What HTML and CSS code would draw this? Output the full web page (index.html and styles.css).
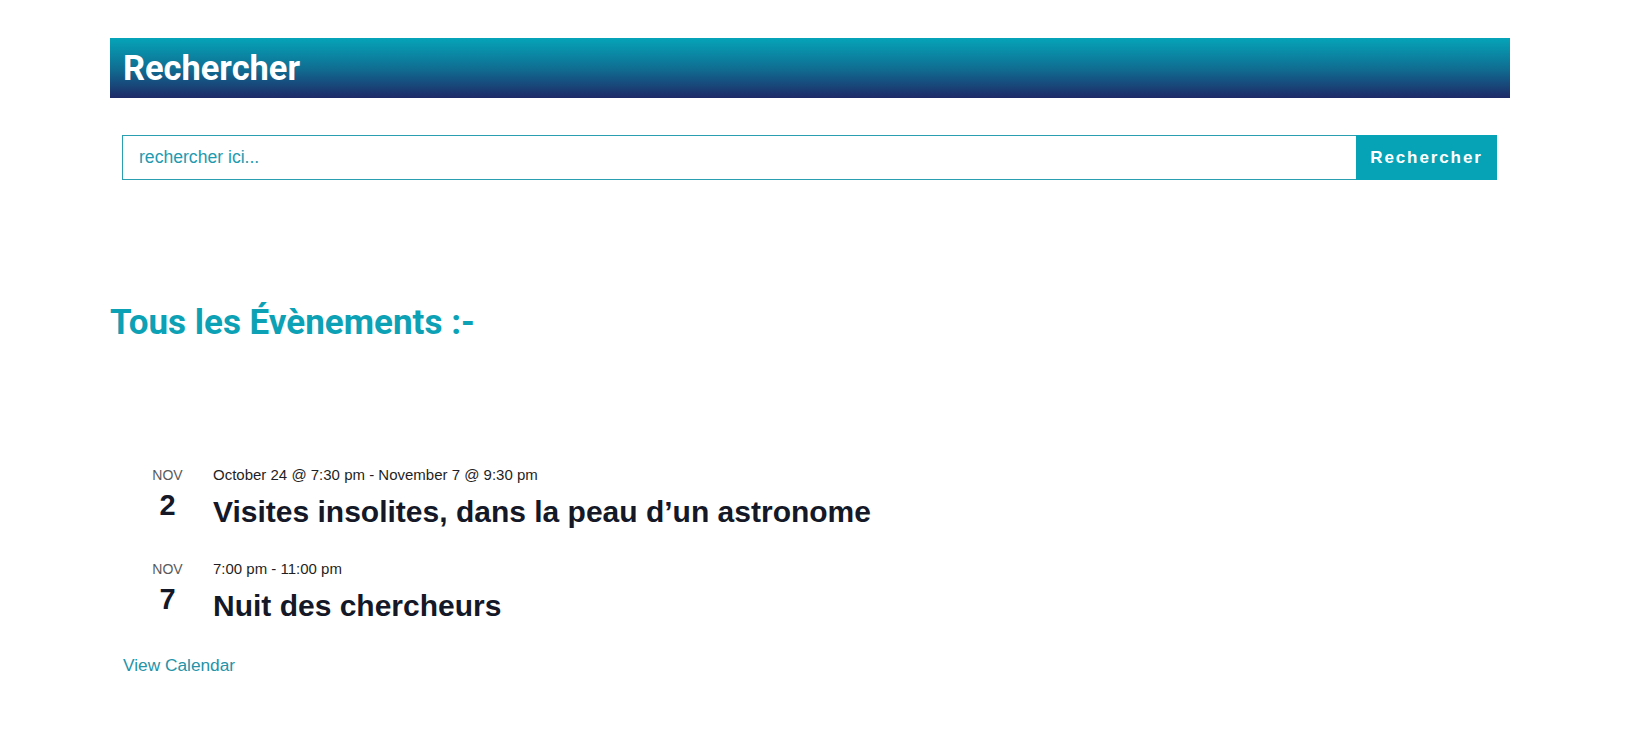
FILE: index.html
```html
<!DOCTYPE html>
<html lang="fr">
<head>
<meta charset="utf-8">
<title>Rechercher</title>
<link rel="stylesheet" href="styles.css">
</head>
<body>
<div class="page">
  <div class="search-header">
    <h2 class="search-title">Rechercher</h2>
  </div>
  <form class="search-form" onsubmit="return false">
    <input class="search-input" type="text" placeholder="rechercher ici...">
    <button class="search-button" type="submit">Rechercher</button>
  </form>

  <h2 class="events-heading">Tous les Évènements :-</h2>

  <div class="events">
    <div class="event">
      <div class="event-date">
        <span class="event-month">NOV</span>
        <span class="event-day">2</span>
      </div>
      <div class="event-info">
        <div class="event-time">October 24 @ 7:30 pm - November 7 @ 9:30 pm</div>
        <h3 class="event-title">Visites insolites, dans la peau d’un astronome</h3>
      </div>
    </div>
    <div class="event">
      <div class="event-date">
        <span class="event-month">NOV</span>
        <span class="event-day">7</span>
      </div>
      <div class="event-info">
        <div class="event-time">7:00 pm - 11:00 pm</div>
        <h3 class="event-title">Nuit des chercheurs</h3>
      </div>
    </div>
    <a class="view-calendar" href="#">View Calendar</a>
  </div>
</div>
</body>
</html>
```
FILE: styles.css
```css
html, body {
  margin: 0;
  padding: 0;
  background: #ffffff;
}
body {
  font-family: "Liberation Sans", Arial, sans-serif;
}
.page {
  width: 1400px;
  margin-left: 110px;
  padding-top: 38px;
}
.search-header {
  height: 60px;
  display: flex;
  align-items: center;
  padding-left: 13px;
  background: linear-gradient(to bottom, #05a4b8 0%, #0f6f93 50%, #1e2a68 100%);
}
.search-title {
  margin: 0;
  font-family: Roboto, "Liberation Sans", sans-serif;
  font-weight: 700;
  font-size: 34.4px;
  line-height: 1;
  color: #ffffff;
}
.search-form {
  display: flex;
  margin: 37px 0 0 12px;
  width: 1375px;
  height: 45px;
}
.search-input {
  flex: 1;
  box-sizing: border-box;
  height: 45px;
  margin: 0;
  border: 1px solid #2a9fb1;
  border-right: none;
  padding: 0 16px;
  font-family: "Liberation Sans", Arial, sans-serif;
  font-size: 17.6px;
  color: #1e9bb0;
  outline: none;
}
.search-input::placeholder {
  color: #1e9bb0;
  opacity: 1;
}
.search-button {
  width: 141px;
  height: 45px;
  margin: 0;
  border: none;
  background: #06a3b7;
  color: #ffffff;
  font-family: "Liberation Sans", Arial, sans-serif;
  font-weight: 700;
  font-size: 17px;
  letter-spacing: 1.9px;
  padding: 0;
  cursor: pointer;
}
.events-heading {
  margin: 122px 0 0 0;
  font-family: Roboto, "Liberation Sans", sans-serif;
  font-weight: 700;
  font-size: 35px;
  line-height: normal;
  color: #0ca1b5;
}
.events {
  margin-top: 121px;
  padding-left: 13px;
  display: flex;
  flex-direction: column;
}
.event {
  display: flex;
  gap: 18px;
  padding-left: 17px;
  margin-bottom: 29px;
}
.event-date {
  width: 55px;
  display: flex;
  flex-direction: column;
  align-items: center;
  padding-top: 4px;
}
.event-month {
  font-size: 14px;
  line-height: 15px;
  color: #5a5a5a;
}
.event-day {
  font-size: 29px;
  font-weight: 700;
  line-height: 34px;
  margin-top: 5px;
  color: #141827;
}
.event-info {
  display: flex;
  flex-direction: column;
}
.event-time {
  font-size: 15px;
  line-height: 21px;
  color: #1f1f24;
}
.event-title {
  margin: 10px 0 0 0;
  font-size: 30px;
  font-weight: 700;
  line-height: 34px;
  color: #141827;
}
.view-calendar {
  margin-top: 3px;
  font-size: 17.3px;
  line-height: 20px;
  color: #2593a8;
  text-decoration: none;
  align-self: flex-start;
}
```
